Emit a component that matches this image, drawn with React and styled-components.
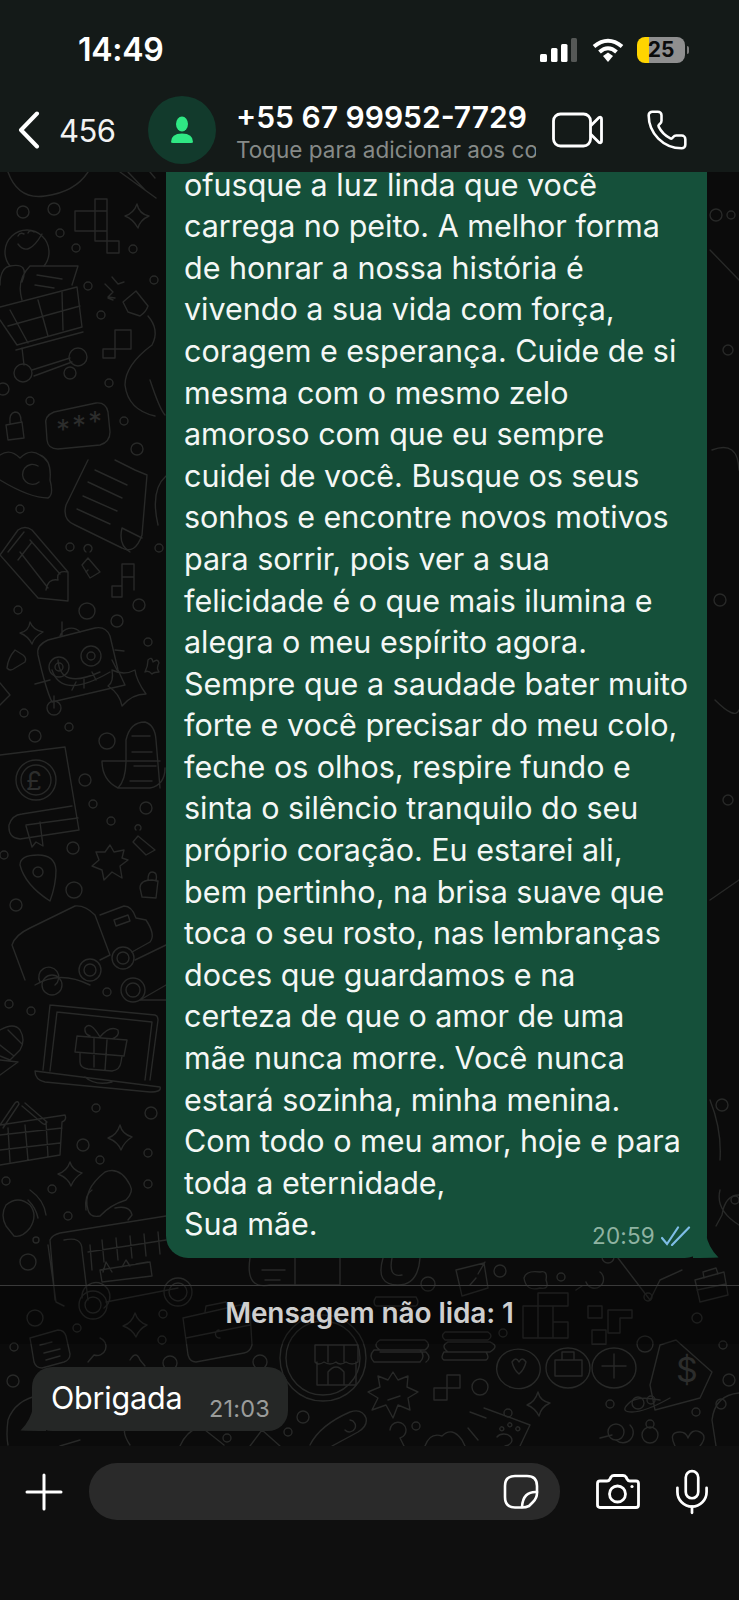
import { Mic, Phone } from 'lucide-react';
import styled, { createGlobalStyle } from 'styled-components';

const GlobalStyle = createGlobalStyle`
  html, body {
    margin: 0;
    padding: 0;
    background: #0f0f0f;
  }
  * {
    box-sizing: border-box;
  }
`;

const Screen = styled.div`
  width: 739px;
  height: 1600px;
  display: flex;
  flex-direction: column;
  overflow: hidden;
  background: #0f0f0f;
  color: #fff;
  font-family: Inter, "Liberation Sans", sans-serif;
`;
const TopBar = styled.header`
  height: 172px;
  flex-shrink: 0;
  display: flex;
  flex-direction: column;
  background: #141a18;
  position: relative;
  z-index: 2;
`;
const StatusBar = styled.div`
  height: 96px;
  padding: 3px 54px 0 78px;
  display: flex;
  align-items: center;
  justify-content: space-between;
`;
const Clock = styled.span`
  font-size: 32px;
  font-weight: 600;
  letter-spacing: -0.3px;
`;
const StatusIcons = styled.div`
  display: flex;
  align-items: center;
`;
const Battery = styled.div`
  position: relative;
  width: 48px;
  height: 26px;
  margin-left: 13px;
  border-radius: 8px;
  display: flex;
  align-items: center;
  justify-content: center;
  color: #0b0b0b;
  font-size: 21px;
  font-weight: 700;
  background: linear-gradient(90deg, #ffd400 0, #ffd400 12px, #8f8f8f 12px);
  &::after {
    content: '';
    position: absolute;
    right: -4px;
    top: 9px;
    width: 2px;
    height: 8px;
    border-radius: 0 2px 2px 0;
    background: #7d7d7d;
  }
`;
const NavBar = styled.nav`
  height: 76px;
  padding: 0 0 8px 18px;
  display: flex;
  align-items: center;
`;
const BackCount = styled.span`
  width: 108px;
  padding-left: 19px;
  font-size: 31px;
  color: #f2f2f2;
  letter-spacing: -0.5px;
`;
const Avatar = styled.div`
  width: 68px;
  height: 68px;
  flex-shrink: 0;
  border-radius: 50%;
  background: #123a2c;
  display: flex;
  align-items: center;
  justify-content: center;
`;
const Titles = styled.div`
  width: 300px;
  margin-left: 20px;
  display: flex;
  flex-direction: column;
  overflow: hidden;
  white-space: nowrap;
`;
const ContactName = styled.div`
  font-size: 30px;
  line-height: 40px;
  font-weight: 600;
`;
const ContactHint = styled.div`
  font-size: 22.5px;
  line-height: 26px;
  color: #868a88;
`;
const NavAction = styled.div`
  display: flex;
  margin-left: ${(p) => p.$gap}px;
`;

const Chat = styled.main`
  flex: 1;
  min-height: 0;
  position: relative;
  overflow: hidden;
  display: flex;
  flex-direction: column;
  justify-content: flex-end;
  background: #0b0b0b;
`;
const Doodles = styled.svg`
  position: absolute;
  inset: 0;
  width: 100%;
  height: 100%;
  fill: none;
  stroke: #282928;
  stroke-width: 1.4;
  stroke-linecap: round;
  stroke-linejoin: round;
`;
const DoodleMark = styled.text`
  fill: #2c2d2c;
  stroke: none;
  font-family: Inter, sans-serif;
  font-size: ${(p) => p.$size}px;
`;
const Outgoing = styled.div`
  position: relative;
  flex-shrink: 0;
  margin: 0 32px 27px 166px;
  padding: 40px 16px 13px 18px;
  background: #15503a;
  border-radius: 22px;
  font-size: 30.5px;
  line-height: 41.6px;
  color: #f4f7f5;
  letter-spacing: -0.02px;
  white-space: nowrap;
`;
const Tail = styled.svg`
  position: absolute;
  bottom: 0;
  ${(p) => (p.$left ? 'left: -12px;' : 'right: -12px;')}
  fill: ${(p) => p.$color};
`;
const LastLine = styled.div`
  display: flex;
  justify-content: space-between;
`;
const Meta = styled.span`
  display: flex;
  align-items: center;
  gap: 6px;
  align-self: flex-end;
  position: relative;
  top: 12px;
  font-size: 22.5px;
  letter-spacing: 0.2px;
  color: #8fb3a2;
`;
const UnreadBand = styled.div`
  position: relative;
  flex-shrink: 0;
  height: 59px;
  padding-bottom: 4px;
  border-top: 1px solid #3a3a3a;
  background: rgba(0, 0, 0, 0.25);
  display: flex;
  align-items: center;
  justify-content: center;
  font-size: 28px;
  font-weight: 600;
  color: #cfcfcf;
  letter-spacing: -0.1px;
`;
const Incoming = styled.div`
  position: relative;
  flex-shrink: 0;
  align-self: flex-start;
  width: 256px;
  height: 64px;
  margin: 23px 0 15px 32px;
  padding: 0 18px 4px 19px;
  background: #252726;
  border-radius: 20px;
  display: flex;
  align-items: center;
  justify-content: space-between;
  font-size: 30.5px;
  letter-spacing: -0.2px;
`;
const IncomingTime = styled.span`
  position: relative;
  top: 11px;
  font-size: 23.5px;
  color: #9a9c9b;
  letter-spacing: 0.2px;
`;
const Composer = styled.footer`
  height: 154px;
  flex-shrink: 0;
  padding: 17px 0 0 25px;
  display: flex;
  align-items: flex-start;
  background: #0f0f0f;
`;
const ComposerSlot = styled.div`
  height: 57px;
  flex-shrink: 0;
  display: flex;
  align-items: center;
  margin-left: ${(p) => p.$gap || 0}px;
`;
const InputPill = styled.div`
  width: 471px;
  height: 57px;
  flex-shrink: 0;
  margin-left: 26px;
  padding-right: 21px;
  border-radius: 28px;
  background: #2a2a2a;
  display: flex;
  align-items: center;
  justify-content: flex-end;
`;

const messageLines = [
  'ofusque a luz linda que você',
  'carrega no peito. A melhor forma',
  'de honrar a nossa história é',
  'vivendo a sua vida com força,',
  'coragem e esperança. Cuide de si',
  'mesma com o mesmo zelo',
  'amoroso com que eu sempre',
  'cuidei de você. Busque os seus',
  'sonhos e encontre novos motivos',
  'para sorrir, pois ver a sua',
  'felicidade é o que mais ilumina e',
  'alegra o meu espírito agora.',
  'Sempre que a saudade bater muito',
  'forte e você precisar do meu colo,',
  'feche os olhos, respire fundo e',
  'sinta o silêncio tranquilo do seu',
  'próprio coração. Eu estarei ali,',
  'bem pertinho, na brisa suave que',
  'toca o seu rosto, nas lembranças',
  'doces que guardamos e na',
  'certeza de que o amor de uma',
  'mãe nunca morre. Você nunca',
  'estará sozinha, minha menina.',
  'Com todo o meu amor, hoje e para',
  'toda a eternidade,',
];

// x, y, r in page coordinates
const rings = [
  [23,212,6],[54,209,6],[60,233,4],[76,248,4],[88,286,4],[101,315,4],[154,280,4],[133,249,4],[70,373,6],[3,389,6],
  [30,401,4],[109,383,4],[124,421,4],[137,449,6],[20,509,4],[70,547,4],[18,610,4],[87,611,8],[117,621,6],[139,605,6],
  [159,548,4],[148,642,4],[24,713,4],[54,708,7],[35,736,6],[69,727,4],[107,741,8],[85,780,6],[93,804,4],[111,821,4],
  [146,808,6],[73,848,6],[4,855,4],[74,890,8],[16,905,6],[9,1004,4],[31,1011,4],[107,992,4],[96,1108,4],[151,1113,6],
  [83,1145,6],[100,1160,4],[148,1153,4],[6,1181,4],[52,1189,4],[148,1184,4],[68,1216,4],[36,1240,3],[28,1262,8],[35,1318,8],
  [14,1347,4],[13,1381,6],[77,1328,4],[163,1314,4],[162,1340,4],[170,1363,7],[260,1362,7],[303,1417,6],[288,1432,4],[227,1438,4],
  [480,1387,8],[508,1413,4],[416,1426,4],[610,1404,4],[608,1257,6],[651,1400,4],[638,1403,6],[648,1297,4],[697,1318,5],[723,1345,4],
  [645,1344,8],[721,1404,5],[696,1412,4],[616,1432,8],[650,1424,4],[650,1435,8],[729,1380,6],[500,1271,6],[561,1277,4],[428,1284,7],
  [503,1333,4],[735,1200,4],[722,1105,6],[728,800,5],[720,600,6],[728,350,5],[716,215,6],[731,215,4],
];

const paths = [
  // top blob
  'M8 172 Q18 200 45 196 Q75 192 88 172',
  'M120 172 L156 198 M128 172 L145 190 M150 172 L155 178',
  // squares
  'M75 211 H95 V231 H75 Z M95 199 H107 V211 H95 Z M95 211 V231 M107 211 V231 H95 M95 231 V241 H107 V231 M107 241 H119 V253 H107 Z',
  // sparkle
  'M137 204 Q139 214 149 216 Q140 220 138 228 Q133 219 125 216 Q134 213 137 204 Z',
  // cart
  'M10 266 A22 22 0 1 1 44 266 M18 244 Q28 258 42 234 M18 236 Q20 232 24 234 M28 233 Q30 229 34 232',
  'M22 282 Q30 262 10 266 Q0 268 0 285 M22 300 Q16 280 30 266 L78 266 L72 285',
  'M37 275 L62 279 M35 285 L54 288',
  'M0 307 L77 287 L82 327 L17 345 L0 320',
  'M10 310 L28 343 M38 300 L48 336 M62 292 L63 330 M8 326 L80 306',
  'M16 350 L83 332 M22 348 L24 365 M32 370 L70 358 M34 376 L72 362',
  // plug
  'M105 284 L113 292 L108 297 L115 298 M112 277 L118 284 L124 282 M108 298 L113 300',
  'M123 302 L136 291 L148 306 Q146 312 140 316 L128 312 Z M148 316 Q160 330 152 345 Q125 365 125 385 Q128 410 155 416',
  // small squares
  'M115 330 H131 V349 H115 V330 Z M103 349 H115 V358 H103 Z',
  'M150 380 Q160 410 165 415',
  // lock
  'M6 425 L22 422 L24 438 L8 440 Z M10 423 Q9 413 15 412 Q21 412 21 421',
  // *** card
  'M46 425 Q44 416 54 412 L96 403 Q106 402 108 412 L110 432 Q110 442 100 445 L58 449 Q48 449 47 440 Z',
  // cloud and C
  'M0 455 Q10 448 20 458 Q30 448 40 455 Q52 460 50 480 Q54 495 48 498 Q30 498 0 480',
  'M38 466 A10 10 0 1 0 39 482',
  // receipt
  'M88 460 L66 505 Q62 520 75 525 L122 548 Q135 555 142 535 L147 475 L135 470 L125 465 L115 460',
  'M95 470 L127 485 M88 482 L122 498 M83 496 L117 511 M77 509 L110 524 M122 528 L142 538 M122 528 Q118 545 130 552',
  // basket circle on right edge
  'M166 476 Q150 490 158 525',
  // pencil
  'M0 555 L18 530 Q25 525 32 530 L68 572 L68 601 L38 598 L0 555 Z M8 552 L24 532 M18 560 L32 542 M30 540 L60 574 M20 552 L48 588 M46 590 Q48 578 58 580 Q56 570 68 572',
  // piece
  'M86 552 A4 4 0 1 1 90 552 M82 565 L88 558 L100 572 L90 578 Z M86 572 L88 570',
  'M122 564 H134 V590 M122 564 V590 M122 577 H134 M112 586 H122 V597 H112 Z',
  // robot
  'M38 655 Q36 645 48 640 L95 628 Q106 626 110 636 L118 670 L125 685 L52 702 Q46 690 38 655 Z',
  'M60 636 A12 12 0 0 1 80 632 M62 622 V636',
  'M115 650 L124 651 M118 672 L112 660 M35 684 L50 680',
  'M52 670 Q62 700 110 672 M58 660 Q60 690 100 672 M72 690 L76 682 M84 688 L84 678 M96 680 L92 672',
  'M54 696 L54 708',
  // sparkle, triangle
  'M30 622 Q33 630 43 632 Q34 637 32 644 Q28 636 20 633 Q29 631 30 622 Z',
  'M15 650 Q8 658 7 668 Q10 672 15 668 L25 662 Q27 658 23 655 Z',
  'M0 683 L10 695 L0 705',
  // big star + cross
  'M112 670 Q124 676 135 670 Q136 680 146 694 Q132 694 122 706 Q120 694 108 686 Q114 682 112 670 Z',
  'M148 660 Q152 656 153 662 Q158 658 159 663 Q156 668 159 672 Q154 672 152 674 Q148 670 145 672 Q148 666 148 660 Z',
  // scroll
  'M126 760 L126 740 Q130 722 145 722 Q155 725 156 740 L160 788 M102 761 H160 M102 761 Q102 780 118 788 Q126 780 126 760 M118 788 H150 Q165 785 165 768 M132 736 H150 M132 752 H152 M134 766 H156 M130 781 H152',
  // book
  'M0 755 L65 747 L79 830 L20 839 Q8 838 9 825 Q12 815 22 814 L72 806 M26 825 L78 818',
  'M26 826 L32 847 L36 842 L43 846 L40 822',
  // pin
  'M50 901 Q25 885 20 865 Q20 855 38 855 Q55 855 56 870 Q56 885 50 901 Z',
  // bishop
  'M136 830 A3 3 0 1 1 140 830 M133 842 L138 836 L155 850 L146 855 Z',
  // burst
  'M110 845 L114 852 L124 850 L122 858 L128 860 L120 866 L122 878 L112 872 L104 880 L102 870 L92 866 L99 860 L96 852 L105 852 Z',
  // lock
  'M140 888 Q140 880 152 880 L158 881 L156 898 L142 897 Z M148 880 Q148 872 152 872 Q158 872 156 881',
  // suitcase
  'M12 945 Q15 935 30 928 L75 906 Q85 905 95 915 L110 955 L100 960 M12 945 L25 980 M100 915 L124 906 Q132 906 136 918 L146 920 Q156 935 150 942 L132 952',
  'M114 920 L128 915 L130 921 L116 926 Z',
  'M35 985 Q60 970 90 985 M135 960 L166 945',
  // wheels
  'M55 985 A10 10 0 1 0 40 982',
  // target
  'M166 1000 L140 1000 L166 985',
  // laptop
  'M50 1005 L155 1015 Q158 1016 158 1020 L150 1080 M57 1012 L152 1022 L145 1080 M50 1005 L43 1070 M57 1012 L50 1071 M35 1071 L160 1087 Q162 1092 150 1092 L45 1082 Q35 1080 35 1071 M85 1077 Q95 1086 112 1082',
  // gift
  'M77 1036 L127 1040 L124 1056 L75 1052 Z M80 1053 L80 1062 Q80 1068 88 1069 L112 1071 Q120 1070 121 1062 L122 1056 M94 1038 L94 1067 M107 1040 L105 1070 M100 1037 Q90 1020 85 1028 Q84 1034 90 1036 M100 1037 Q110 1025 118 1030 Q120 1036 112 1039',
  // fruit
  'M0 1030 Q14 1022 20 1030 Q26 1040 20 1050 L10 1060 L0 1056 M0 1045 L14 1056 M8 1030 L22 1044 M0 1075 L18 1062 L0 1060',
  // basket
  'M0 1125 L15 1103 Q18 1100 19 1104 L3 1128 M25 1103 L47 1122 Q45 1126 42 1123 L22 1106 M0 1125 L65 1115 Q67 1120 62 1122 L60 1155 L0 1165 M0 1135 L62 1128 M0 1150 L60 1143 M8 1128 L10 1162 M25 1125 L28 1160 M46 1122 L48 1157',
  // sparkles
  'M120 1125 Q122 1134 132 1137 Q124 1142 121 1150 Q118 1142 108 1138 Q117 1135 120 1125 Z',
  'M70 1162 Q72 1170 82 1173 Q74 1178 71 1186 Q68 1178 58 1174 Q67 1171 70 1162 Z',
  // taco
  'M88 1210 Q82 1190 105 1172 Q120 1166 130 1185 Q134 1192 126 1200 Q110 1205 100 1216 Q90 1218 88 1210 Z M92 1190 Q84 1195 86 1210 M115 1208 Q130 1205 132 1215 L128 1220',
  // chat bubble
  'M14 1236 L6 1226 Q0 1215 6 1205 Q18 1195 30 1205 Q38 1215 30 1228 Q22 1238 14 1236 Z M30 1190 Q44 1200 46 1215 M28 1200 Q36 1208 38 1218',
  // food truck
  'M50 1240 Q52 1235 60 1233 L166 1216 M50 1240 L55 1300 M48 1245 L56 1302 L64 1306 M64 1240 Q82 1236 82 1250 L88 1300 M88 1252 L166 1240 M90 1245 L92 1270 M102 1240 L104 1262 M116 1238 L118 1260 M130 1236 L132 1258 M144 1234 L146 1256 M158 1232 L160 1254',
  'M100 1270 L150 1262 L152 1276 L102 1282 Z M103 1272 L106 1262 L112 1272 M122 1267 L126 1260 L130 1266 M136 1264 L148 1262',
  'M104 1308 A14 14 0 1 0 82 1298 M106 1302 L178 1288',
  // briefcase
  'M183 1318 L240 1305 Q248 1305 250 1312 L252 1345 Q250 1352 244 1353 L196 1362 Q190 1362 188 1355 Z M205 1312 L206 1306 L226 1302 L228 1307 M186 1338 L250 1325 M219 1330 A4 4 0 1 0 220 1338',
  // note & magnifier
  'M30 1338 L58 1330 Q64 1330 66 1336 L70 1354 Q70 1360 64 1362 L42 1368 Q36 1368 34 1362 Z M40 1345 L52 1342 M44 1353 L60 1349 M46 1360 L60 1356',
  'M94 1355 L88 1362 M100 1338 A9 9 0 1 1 94 1355',
  // sparkle
  'M135 1313 Q138 1322 147 1325 Q139 1329 136 1337 Q132 1329 123 1326 Q132 1323 135 1313 Z',
  // stuff left
  'M130 1360 Q136 1350 140 1360 L145 1366',
  'M40 1395 Q15 1400 8 1420 Q6 1435 8 1445',
  'M130 1445 Q120 1430 128 1425',
  // store circle
  'M315 1345 H358 V1362 Q352 1366 346 1362 Q340 1366 336 1362 Q330 1366 324 1362 Q318 1366 315 1362 Z M317 1362 L317 1385 H356 V1362 M328 1345 V1362 M344 1345 V1362 M328 1372 Q336 1362 344 1372 L344 1385 H328 Z',
  // store back + top-middle shapes
  'M250 1258 Q245 1290 270 1285 H310 M295 1258 V1285 M340 1258 V1285 H300 M262 1270 H285 M265 1280 H280',
  'M383 1258 Q375 1285 398 1285 Q418 1285 420 1258 M392 1258 Q388 1278 402 1275',
  // stacks
  'M376 1297 H416 Q420 1303 416 1306 H376 Q372 1303 376 1297 Z M380 1340 H425 Q432 1345 425 1350 H380 Q372 1345 380 1340 Z M374 1350 H420 Q426 1356 420 1362 H374 Q368 1356 374 1350 Z M380 1352 H426 Q432 1358 426 1362',
  'M445 1332 H488 Q494 1336 488 1340 H445 Q440 1336 445 1332 Z M448 1342 H490 Q500 1346 490 1352 H448 Q440 1346 448 1342 Z M444 1352 H486 Q490 1358 486 1360 H444 Q440 1358 444 1352 Z',
  // squares
  'M523 1306 H538 V1338 H523 Z M538 1293 H568 V1306 H538 Z M538 1306 H553 V1338 H538 Z M553 1322 H568 V1338 H553 Z M588 1306 H602 V1318 H588 Z M592 1330 H606 V1344 H592 Z M608 1310 H632 V1318 H620 V1333 H608 Z',
  // check box
  'M456 1270 L484 1263 L488 1288 L462 1296 Z M470 1285 L476 1278 M478 1274 L485 1262',
  // cloud
  'M524 1278 Q526 1270 540 1272 Q548 1270 546 1280 Q550 1290 540 1288 Q526 1292 524 1278 Z',
  // magnifier
  'M582 1286 L576 1290 M600 1272 A9 9 0 1 1 586 1282',
  // cursor
  'M618 1258 L650 1300 L660 1280 L682 1270',
  // case
  'M695 1280 L724 1272 L728 1295 L700 1302 Z M704 1278 L703 1272 L716 1268 L718 1274 M697 1290 L726 1284',
  // coins
  'M540 1366 A22 20 0 0 0 500 1358 A22 20 0 0 0 524 1388 A22 20 0 0 0 540 1366 Z M590 1368 A22 20 0 1 0 546 1368 A22 20 0 1 0 590 1368 Z M636 1368 A22 20 0 1 0 592 1368 A22 20 0 1 0 636 1368 Z',
  'M512 1362 Q516 1356 519 1362 Q522 1356 526 1362 Q524 1370 519 1374 Q514 1370 512 1362 Z M555 1360 H582 V1376 H555 Z M562 1360 V1352 H574 V1360 M614 1354 V1378 M602 1366 H626',
  // burst
  'M393 1372 L398 1380 L408 1376 L407 1387 L418 1392 L408 1398 L410 1410 L398 1405 L393 1418 L386 1405 L372 1410 L378 1398 L368 1392 L380 1387 L378 1376 L388 1380 Z M388 1400 L400 1396',
  // small squares
  'M447 1375 H460 V1388 H447 Z M434 1388 H447 V1400 H434 Z',
  // sparkle
  'M538 1392 Q540 1401 550 1403 Q541 1407 539 1416 Q535 1408 527 1405 Q535 1402 538 1392 Z',
  // paw card
  'M484 1408 L530 1425 L520 1446 M470 1412 L486 1418 M468 1428 L478 1440 M497 1437 A8 6 0 1 1 505 1446',
  'M500 1428 A2 2 0 1 0 501 1427 M508 1424 A2 2 0 1 0 509 1423 M516 1428 A2 2 0 1 0 517 1427',
  'M425 1446 Q430 1432 442 1436 Q452 1426 462 1440 L465 1446',
  // tag
  'M660 1345 L676 1340 L712 1372 L700 1398 L655 1410 L650 1385 Z M660 1400 Q635 1395 628 1404 Q620 1412 632 1412 Q645 1412 670 1398',
  // heart + curve
  'M675 1446 Q668 1432 680 1432 Q686 1432 688 1438 Q692 1428 700 1432 Q708 1436 700 1446',
  'M739 1393 Q715 1395 712 1420 L716 1446',
  'M612 1435 L600 1438 M630 1425 A9 9 0 1 1 616 1440',
  // capsule
  'M310 1445 Q320 1425 350 1412 Q362 1408 366 1418 Q368 1426 358 1432 L332 1446 M345 1430 A6 6 0 1 0 350 1420',
  // magnifier, bottom left pieces
  'M390 1430 A8 8 0 1 1 400 1438 L404 1446',
  'M180 1446 Q186 1432 200 1426 L224 1445 M250 1446 L262 1430 L280 1446 M80 1440 L60 1446',
  // right edge
  'M739 1225 Q715 1210 720 1190 M739 1195 Q725 1195 722 1215 L716 1226',
  'M710 1100 Q722 1130 720 1160 M715 700 Q735 720 739 710 M712 450 Q738 440 739 470 M710 900 L739 880 M710 250 L739 280',
];

const Signal = () => (
  <svg width="37" height="24" viewBox="0 0 37 24">
    <rect x="0" y="16" width="7" height="8" rx="1.5" fill="#fff" />
    <rect x="11" y="10" width="6.5" height="14" rx="1.5" fill="#fff" />
    <rect x="21" y="6" width="6.5" height="18" rx="1.5" fill="#fff" />
    <rect x="31" y="0" width="6" height="24" rx="1.5" fill="#555856" />
  </svg>
);

const Wifi = () => (
  <svg width="32" height="24" viewBox="0 0 32 24" fill="none" stroke="#fff" style={{ marginLeft: 15 }}>
    <path d="M2 8.5 Q16 -3 30 8.5" strokeWidth="4" />
    <path d="M7.5 14 Q16 6.5 24.5 14" strokeWidth="4" />
    <path d="M11 18 L16 14.5 L21 18 L16 24 Z" fill="#fff" stroke="none" />
  </svg>
);

const Chevron = () => (
  <svg width="22" height="38" viewBox="0 0 22 38" fill="none" stroke="#fff" strokeWidth="4" strokeLinecap="round" strokeLinejoin="round">
    <path d="M19 2.5 L3 19 L19 35.5" />
  </svg>
);

const PersonIcon = () => (
  <svg width="26" height="30" viewBox="0 0 26 30" fill="#2fe884">
    <ellipse cx="13" cy="9" rx="6" ry="7.5" />
    <path d="M2 27 Q2 18.5 13 18.5 Q24 18.5 24 27 Q24 28 22 28 H4 Q2 28 2 27 Z" />
  </svg>
);

const VideoIcon = () => (
  <svg width="51" height="36" viewBox="0 0 51 36" fill="none" stroke="#fff" strokeWidth="2.8" strokeLinejoin="round">
    <rect x="1.5" y="2" width="37" height="32" rx="7" />
    <path d="M38.5 14 L47 5.5 Q49.5 4.5 49.5 7 V29 Q49.5 31.5 47 30.5 L38.5 22" />
  </svg>
);

const Ticks = () => (
  <svg width="30" height="20" viewBox="0 0 30 20" fill="none" stroke="#7ebde6" strokeWidth="2.2" strokeLinecap="round">
    <path d="M1 12 L6 18 L17 1.5" />
    <path d="M11 19 L28 1.5" />
  </svg>
);

const PlusIcon = () => (
  <svg width="38" height="38" viewBox="0 0 38 38" stroke="#fff" strokeWidth="3" strokeLinecap="round">
    <path d="M19 2 V36 M2 19 H36" />
  </svg>
);

const StickerIcon = () => (
  <svg width="36" height="35" viewBox="0 0 36 35" fill="none" stroke="#fff" strokeWidth="2.6" strokeLinejoin="round" strokeLinecap="round">
    <path d="M12 2 H24 Q34 2 34 12 V19 Q34 24 30 28 L26 32 Q23 33.5 19 33.5 H12 Q2 33.5 2 23 V12 Q2 2 12 2 Z" />
    <path d="M34 18 Q20 17 19 33" />
  </svg>
);

const CameraIcon = () => (
  <svg width="44" height="35" viewBox="0 0 44 35" fill="none" stroke="#fff" strokeWidth="2.8" strokeLinejoin="round">
    <path d="M4 7 H11 Q13 7 14 5 L15 3 Q16 1.5 18 1.5 H27 Q29 1.5 30 3 L31 5 Q32 7 34 7 H40 Q42.5 7 42.5 9.5 V31 Q42.5 33.5 40 33.5 H4 Q1.5 33.5 1.5 31 V9.5 Q1.5 7 4 7 Z" />
    <circle cx="21.5" cy="20" r="8" />
    <circle cx="36" cy="12.5" r="1.6" fill="#fff" stroke="none" />
  </svg>
);

export default function App() {
  return (
    <Screen>
      <GlobalStyle />
      <TopBar>
        <StatusBar>
          <Clock>14:49</Clock>
          <StatusIcons>
            <Signal />
            <Wifi />
            <Battery>25</Battery>
          </StatusIcons>
        </StatusBar>
        <NavBar>
          <Chevron />
          <BackCount>456</BackCount>
          <Avatar>
            <PersonIcon />
          </Avatar>
          <Titles>
            <ContactName>+55 67 99952-7729</ContactName>
            <ContactHint>Toque para adicionar aos contatos</ContactHint>
          </Titles>
          <NavAction $gap={16}>
            <VideoIcon />
          </NavAction>
          <NavAction $gap={42}>
            <Phone size={44} color="#fff" strokeWidth={1.4} />
          </NavAction>
        </NavBar>
      </TopBar>
      <Chat>
        <Doodles viewBox="0 172 739 1274" preserveAspectRatio="none">
          {rings.map(([x, y, r], i) => (
            <circle key={i} cx={x} cy={y} r={r} />
          ))}
          <circle cx="23" cy="373" r="9" />
          <circle cx="78" cy="357" r="9" />
          <circle cx="59" cy="667" r="10" />
          <circle cx="59" cy="667" r="4" />
          <circle cx="91" cy="656" r="10" />
          <circle cx="91" cy="656" r="4" />
          <circle cx="36" cy="780" r="20" />
          <circle cx="36" cy="780" r="15" />
          <circle cx="38" cy="872" r="5" />
          <circle cx="90" cy="970" r="11" />
          <circle cx="90" cy="970" r="6" />
          <circle cx="123" cy="958" r="11" />
          <circle cx="123" cy="958" r="6" />
          <circle cx="133" cy="990" r="12" />
          <circle cx="133" cy="990" r="7" />
          <circle cx="52" cy="985" r="10" />
          <circle cx="178" cy="1292" r="14" />
          <circle cx="178" cy="1292" r="9" />
          <circle cx="93" cy="1305" r="14" />
          <circle cx="93" cy="1305" r="8" />
          <circle cx="323" cy="1358" r="43" />
          <circle cx="323" cy="1358" r="37" />
          <DoodleMark $size={26} x="26" y="790">£</DoodleMark>
          <DoodleMark $size={28} x="56" y="440">*</DoodleMark>
          <DoodleMark $size={28} x="72" y="436">*</DoodleMark>
          <DoodleMark $size={28} x="88" y="432">*</DoodleMark>
          <DoodleMark $size={34} x="676" y="1382">$</DoodleMark>
          {paths.map((d, i) => (
            <path key={i} d={d} />
          ))}
        </Doodles>
        <Outgoing>
          {messageLines.map((line) => (
            <div key={line}>{line}</div>
          ))}
          <LastLine>
            <span>Sua mãe.</span>
            <Meta>
              20:59
              <Ticks />
            </Meta>
          </LastLine>
          <Tail $color="#15503a" width="26" height="24" viewBox="0 0 26 24">
            <path d="M0 0 H13 Q15 13 25.5 23.6 Q15 24 0 24 Z" />
          </Tail>
        </Outgoing>
        <UnreadBand>Mensagem não lida: 1</UnreadBand>
        <Incoming>
          Obrigada
          <IncomingTime>21:03</IncomingTime>
          <Tail $left $color="#252726" width="26" height="24" viewBox="0 0 26 24">
            <path d="M26 0 H13 Q11 13 0.5 23.6 Q11 24 26 24 Z" />
          </Tail>
        </Incoming>
      </Chat>
      <Composer>
        <ComposerSlot>
          <PlusIcon />
        </ComposerSlot>
        <InputPill>
          <StickerIcon />
        </InputPill>
        <ComposerSlot $gap={36}>
          <CameraIcon />
        </ComposerSlot>
        <ComposerSlot $gap={27}>
          <Mic size={50} color="#fff" strokeWidth={1.3} />
        </ComposerSlot>
      </Composer>
    </Screen>
  );
}
